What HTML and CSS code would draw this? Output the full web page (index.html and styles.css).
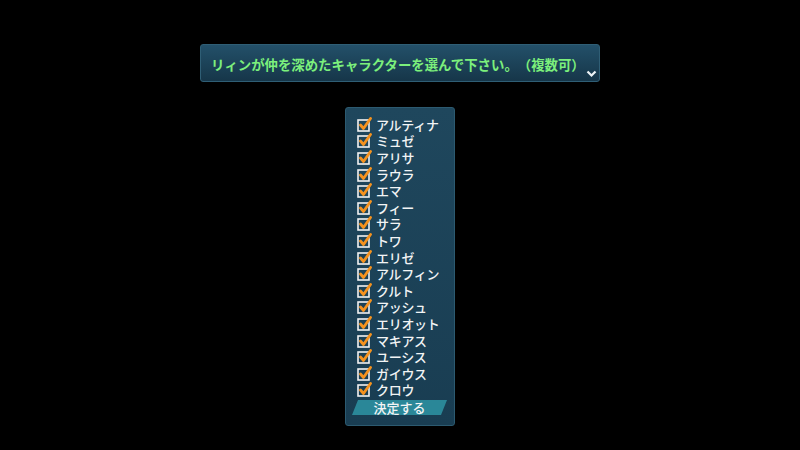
FILE: index.html
```html
<!DOCTYPE html>
<html lang="ja">
<head>
    <meta charset="UTF-8">
    <title>キャラクター選択</title>
    <link rel="stylesheet" href="styles.css">
</head>
<body>
    <div class="screen">
        <div class="prompt">
            <span class="prompt-text">リィンが仲を深めたキャラクターを選んで下さい。（複数可）</span>
            <svg class="more" width="11" height="8" viewBox="0 0 11 8">
                <path d="M1.5 1.5 L5.5 5.5 L9.5 1.5" fill="none" stroke="#eef3f6" stroke-width="2.2"/>
            </svg>
        </div>

        <div class="choices">
            <ul class="choice-list" id="choiceList"></ul>
            <div class="confirm"><span>決定する</span></div>
        </div>
    </div>

    <script>
        const names = ['アルティナ', 'ミュゼ', 'アリサ', 'ラウラ', 'エマ', 'フィー', 'サラ', 'トワ',
            'エリゼ', 'アルフィン', 'クルト', 'アッシュ', 'エリオット', 'マキアス', 'ユーシス', 'ガイウス', 'クロウ'];

        const checkIcon = `
            <svg class="check" width="16" height="15" viewBox="0 0 16 15">
                <rect x="1" y="3" width="11" height="11" fill="none" stroke="#f2f2f2" stroke-width="1.6"/>
                <path d="M3.5 8 L6.5 11.5 L13.5 1.5" fill="none" stroke="#f5921e" stroke-width="2.8" stroke-linecap="round" stroke-linejoin="round"/>
            </svg>`;

        const list = document.getElementById('choiceList');
        names.forEach(name => {
            const li = document.createElement('li');
            li.className = 'choice';
            li.innerHTML = checkIcon + `<span class="choice-name">${name}</span>`;
            list.appendChild(li);
        });
    </script>
</body>
</html>
```

FILE: styles.css
```css
body {
    margin: 0;
    background: #000;
    font-family: "Noto Sans CJK JP", "Noto Sans", sans-serif;
}

.screen {
    width: 800px;
    height: 450px;
    display: flex;
    flex-direction: column;
    align-items: center;
    padding-top: 44px;
    box-sizing: border-box;
}

.prompt {
    position: relative;
    width: 400px;
    height: 38px;
    box-sizing: border-box;
    padding: 0 0 0 10px;
    display: flex;
    align-items: center;
    background: linear-gradient(#235069, #163649);
    border: 1px solid #2f5e75;
    border-radius: 3px;
}

.prompt-text {
    color: #7cf07c;
    font-size: 13.4px;
    line-height: 16px;
    font-weight: bold;
    text-spacing-trim: space-all;
    margin-top: 1px;
}

.more {
    position: absolute;
    right: 2px;
    bottom: 3px;
}

.choices {
    margin-top: 25px;
    width: 110px;
    box-sizing: border-box;
    padding: 8px 0 10px 0;
    background: linear-gradient(#1f475d, #193d52);
    border: 1px solid #2c5a70;
    border-radius: 3px;
}

.choice-list {
    list-style: none;
    margin: 0;
    padding: 0 0 0 11px;
}

.choice {
    display: flex;
    align-items: center;
    height: 16.6px;
}

.check {
    flex: none;
    margin-right: 3px;
}

.choice-name {
    color: #f2f4f5;
    font-size: 13px;
    line-height: 15px;
    font-weight: 500;
    letter-spacing: -0.3px;
}

.confirm {
    margin: 2px 0 0 6px;
    width: 95px;
    height: 15px;
    display: flex;
    justify-content: center;
    align-items: center;
    background: #2a8798;
    clip-path: polygon(6px 0, 100% 0, calc(100% - 6px) 100%, 0 100%);
}

.confirm span {
    color: #f2f4f5;
    font-size: 13px;
    line-height: 15px;
    font-weight: 500;
}
```
